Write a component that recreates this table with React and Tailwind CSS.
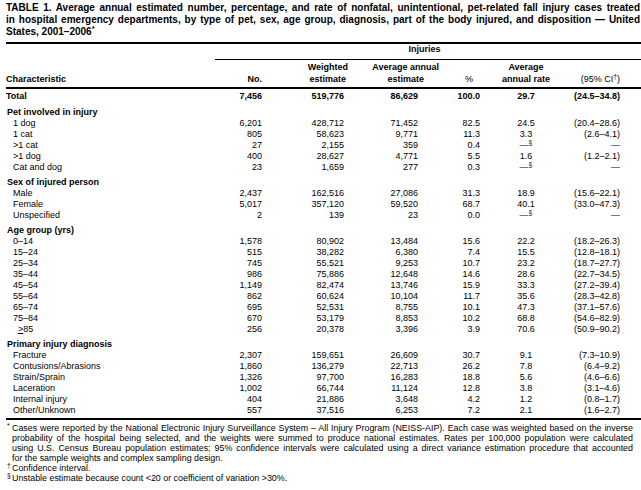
const COLS = 'grid grid-cols-[204px_52px_82px_74px_62px_92px_48px_21px]';

const TOTAL = ['Total', '7,456', '519,776', '86,629', '100.0', '29.7', '(24.5–34.8)'];

const SECTIONS = [
  {
    title: 'Pet involved in injury',
    rows: [
      ['1 dog', '6,201', '428,712', '71,452', '82.5', '24.5', '(20.4–28.6)'],
      ['1 cat', '805', '58,623', '9,771', '11.3', '3.3', '(2.6–4.1)'],
      ['>1 cat', '27', '2,155', '359', '0.4', null, '—'],
      ['>1 dog', '400', '28,627', '4,771', '5.5', '1.6', '(1.2–2.1)'],
      ['Cat and dog', '23', '1,659', '277', '0.3', null, '—'],
    ],
  },
  {
    title: 'Sex of injured person',
    rows: [
      ['Male', '2,437', '162,516', '27,086', '31.3', '18.9', '(15.6–22.1)'],
      ['Female', '5,017', '357,120', '59,520', '68.7', '40.1', '(33.0–47.3)'],
      ['Unspecified', '2', '139', '23', '0.0', null, '—'],
    ],
  },
  {
    title: 'Age group (yrs)',
    rows: [
      ['0–14', '1,578', '80,902', '13,484', '15.6', '22.2', '(18.2–26.3)'],
      ['15–24', '515', '38,282', '6,380', '7.4', '15.5', '(12.8–18.1)'],
      ['25–34', '745', '55,521', '9,253', '10.7', '23.2', '(18.7–27.7)'],
      ['35–44', '986', '75,886', '12,648', '14.6', '28.6', '(22.7–34.5)'],
      ['45–54', '1,149', '82,474', '13,746', '15.9', '33.3', '(27.2–39.4)'],
      ['55–64', '862', '60,624', '10,104', '11.7', '35.6', '(28.3–42.8)'],
      ['65–74', '695', '52,531', '8,755', '10.1', '47.3', '(37.1–57.6)'],
      ['75–84', '670', '53,179', '8,853', '10.2', '68.8', '(54.6–82.9)'],
      ['ge85', '256', '20,378', '3,396', '3.9', '70.6', '(50.9–90.2)'],
    ],
  },
  {
    title: 'Primary injury diagnosis',
    rows: [
      ['Fracture', '2,307', '159,651', '26,609', '30.7', '9.1', '(7.3–10.9)'],
      ['Contusions/Abrasions', '1,860', '136,279', '22,713', '26.2', '7.8', '(6.4–9.2)'],
      ['Strain/Sprain', '1,326', '97,700', '16,283', '18.8', '5.6', '(4.6–6.6)'],
      ['Laceration', '1,002', '66,744', '11,124', '12.8', '3.8', '(3.1–4.6)'],
      ['Internal injury', '404', '21,886', '3,648', '4.2', '1.2', '(0.8–1.7)'],
      ['Other/Unknown', '557', '37,516', '6,253', '7.2', '2.1', '(1.6–2.7)'],
    ],
  },
];

function Row({ row, indent, bold, className = '' }) {
  const [label, no, weighted, avg, pct, rate, ci] = row;
  return (
    <div className={`${COLS} h-[11px] leading-[11px] ${bold ? 'font-bold' : ''} ${className}`}>
      {label === 'ge85' ? (
        <div className="pl-[12px]"><span className="underline underline-offset-1">&gt;</span>85</div>
      ) : (
        <div className={indent ? 'pl-[7px]' : ''}>{label}</div>
      )}
      <div className="text-right">{no}</div>
      <div className="text-right">{weighted}</div>
      <div className="text-right">{avg}</div>
      <div className="text-right">{pct}</div>
      <div className="text-center">{rate ?? <>—<sup>§</sup></>}</div>
      <div className="text-right whitespace-nowrap">{ci}</div>
      <div />
    </div>
  );
}

export default function App() {
  return (
    <div className="w-[641px] h-[490px] bg-white text-black font-['Liberation_Sans',Arial,sans-serif] text-[9px] pl-[6px] overflow-hidden">
      <div className="pt-[2px] pr-[1px] text-[10px] font-bold leading-[12px]">
        <div className="whitespace-nowrap text-justify [text-align-last:justify]">
          TABLE 1. Average annual estimated number, percentage, and rate of nonfatal, unintentional, pet-related fall injury cases treated
        </div>
        <div className="whitespace-nowrap text-justify [text-align-last:justify]">
          in hospital emergency departments, by type of pet, sex, age group, diagnosis, part of the body injured, and disposition — United
        </div>
        <div className="whitespace-nowrap">
          States, 2001–2006<sup>*</sup>
        </div>
      </div>

      <div className="mt-[4px] border-t-2 border-black" />

      <div className={COLS}>
        <div />
        <div className="col-span-7 ml-[5px] border-b border-black pb-[4px] pr-[7px] text-center font-bold leading-[11px]">
          Injuries
        </div>
      </div>

      <div className={`${COLS} items-end pt-[1px] pb-[2px] font-bold leading-[12px]`}>
        <div>Characteristic</div>
        <div className="text-right">No.</div>
        <div className="flex justify-end">
          <div className="mr-[-4px] text-center">Weighted<br />estimate</div>
        </div>
        <div className="flex justify-end">
          <div className="mr-[-21px] whitespace-nowrap text-center">Average annual<br />estimate</div>
        </div>
        <div className="pr-[7px] text-right font-normal">%</div>
        <div className="text-center">Average<br />annual rate</div>
        <div className="whitespace-nowrap text-right font-normal">(95% CI<sup>†</sup>)</div>
        <div />
      </div>

      <div className="border-t-2 border-black" />

      <Row row={TOTAL} bold className="box-content pt-[2px] pb-[1px]" />

      {SECTIONS.map(s => (
        <div key={s.title}>
          <div className="pt-[3px] pl-[1px] font-bold leading-[12px]">{s.title}</div>
          {s.rows.map(r => (
            <Row key={r[0]} row={r} indent />
          ))}
        </div>
      ))}

      <div className="mt-[2px] border-t-2 border-black" />

      <div className="pt-[3px] pr-[8px] text-[8.9px] leading-[10px]">
        <div className="flex">
          <div className="w-[6px] shrink-0 pl-[1px]"><sup>*</sup></div>
          <div className="flex-1 whitespace-nowrap text-justify [text-align-last:justify]">
            Cases were reported by the National Electronic Injury Surveillance System – All Injury Program (NEISS-AIP). Each case was weighted based on the inverse
          </div>
        </div>
        <div className="pl-[6px] whitespace-nowrap text-justify [text-align-last:justify]">
          probability of the hospital being selected, and the weights were summed to produce national estimates. Rates per 100,000 population were calculated
        </div>
        <div className="pl-[6px] whitespace-nowrap text-justify [text-align-last:justify]">
          using U.S. Census Bureau population estimates; 95% confidence intervals were calculated using a direct variance estimation procedure that accounted
        </div>
        <div className="pl-[6px] whitespace-nowrap">for the sample weights and complex sampling design.</div>
        <div className="flex">
          <div className="w-[6px] shrink-0 pl-[1px]"><sup>†</sup></div>
          <div>Confidence interval.</div>
        </div>
        <div className="flex">
          <div className="w-[6px] shrink-0 pl-[1px]"><sup>§</sup></div>
          <div>Unstable estimate because count &lt;20 or coefficient of variation &gt;30%.</div>
        </div>
      </div>
    </div>
  );
}
